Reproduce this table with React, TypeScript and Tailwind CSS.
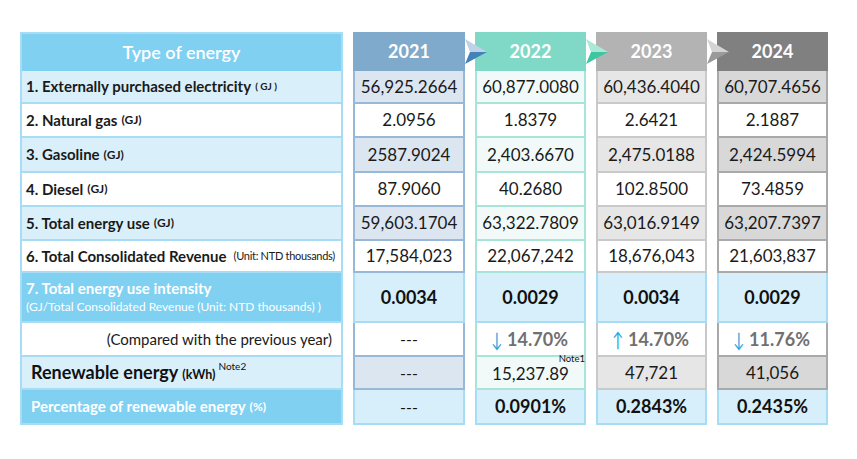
import React from "react";

type Col = {
  year: string;
  head: string;
  light: string;
  border: string;
  arrowTop?: string;
  arrowBot?: string;
};

const H = [33, 34, 35, 34, 34, 32, 50, 34, 33, 35];

const cols: Col[] = [
  { year: "2021", head: "bg-[#7faacc]", light: "bg-[#dce6f1]", border: "border-[#97b8d7]", arrowTop: "#bed1e6", arrowBot: "#4381b9" },
  { year: "2022", head: "bg-[#80d9c6]", light: "bg-[#f1faf9]", border: "border-[#a8e5d8]", arrowTop: "#abe8da", arrowBot: "#3dc7a1" },
  { year: "2023", head: "bg-[#b3b3b3]", light: "bg-[#e6e6e6]", border: "border-[#c9c9c9]", arrowTop: "#d4d4d4", arrowBot: "#9a9a9a" },
  { year: "2024", head: "bg-[#808080]", light: "bg-[#d8d8d8]", border: "border-[#a9a9a9]" },
];

const vals: string[][] = [
  ["56,925.2664", "60,877.0080", "60,436.4040", "60,707.4656"],
  ["2.0956", "1.8379", "2.6421", "2.1887"],
  ["2587.9024", "2,403.6670", "2,475.0188", "2,424.5994"],
  ["87.9060", "40.2680", "102.8500", "73.4859"],
  ["59,603.1704", "63,322.7809", "63,016.9149", "63,207.7397"],
  ["17,584,023", "22,067,242", "18,676,043", "21,603,837"],
];

const intensity = ["0.0034", "0.0029", "0.0034", "0.0029"];
const compare: (null | { dir: "down" | "up"; v: string })[] = [
  null,
  { dir: "down", v: "14.70%" },
  { dir: "up", v: "14.70%" },
  { dir: "down", v: "11.76%" },
];
const renew = ["---", "15,237.89", "47,721", "41,056"];
const pct = ["---", "0.0901%", "0.2843%", "0.2435%"];

function Arrow({ top, bot }: { top: string; bot: string }) {
  return (
    <svg
      className="absolute right-[-22px] top-[7px] z-10"
      width="22"
      height="25"
      viewBox="0 0 22 25"
    >
      <polygon points="0,0 22,13 5,13" fill={top} />
      <polygon points="5,13 22,13 0,25" fill={bot} />
    </svg>
  );
}

function LeftCol() {
  const lbl = "border-x-2 border-b-2 border-[#a8dcf4] flex items-center";
  const main = "text-[15px] font-bold text-[#1a1a1a]";
  const unit = "text-[12px] font-bold text-[#1a1a1a] ml-[4px]";
  return (
    <div className="w-[323px] flex flex-col">
      <div className="h-[39px] bg-[#80d0f2] border-2 border-b-0 border-[#a8dcf4] flex items-center justify-center text-white text-[18px] font-semibold">
        Type of energy
      </div>
      <div className={`${lbl} bg-[#d9f0fb] pl-[4px]`} style={{ height: H[0] }}>
        <span className={main}>1. Externally purchased electricity</span>
        <span className="text-[10px] font-bold text-[#1a1a1a] ml-[4px]">( GJ )</span>
      </div>
      <div className={`${lbl} bg-white pl-[4px]`} style={{ height: H[1] }}>
        <span className={main}>2. Natural gas</span>
        <span className={unit}>(GJ)</span>
      </div>
      <div className={`${lbl} bg-[#d9f0fb] pl-[4px]`} style={{ height: H[2] }}>
        <span className={main}>3. Gasoline</span>
        <span className={unit}>(GJ)</span>
      </div>
      <div className={`${lbl} bg-white pl-[4px]`} style={{ height: H[3] }}>
        <span className={main}>4. Diesel</span>
        <span className={unit}>(GJ)</span>
      </div>
      <div className={`${lbl} bg-[#d9f0fb] pl-[4px]`} style={{ height: H[4] }}>
        <span className={main}>5. Total energy use</span>
        <span className={unit}>(GJ)</span>
      </div>
      <div className={`${lbl} bg-white pl-[4px]`} style={{ height: H[5] }}>
        <span className={main}>6. Total Consolidated Revenue</span>
        <span className="text-[11px] text-[#1a1a1a] ml-[7px] tracking-[-0.3px]">(Unit: NTD thousands)</span>
      </div>
      <div
        className="border-x-2 border-b-2 border-[#a8dcf4] bg-[#80d0f2] pl-[4px] flex flex-col justify-center"
        style={{ height: H[6] }}
      >
        <span className="text-[15px] font-bold text-white leading-[20px]">7. Total energy use intensity</span>
        <span className="text-[12px] text-white leading-[18px]">(GJ/Total Consolidated Revenue (Unit: NTD thousands) )</span>
      </div>
      <div className={`${lbl} bg-white justify-end pr-[9px]`} style={{ height: H[7] }}>
        <span className="text-[15px] text-[#1a1a1a]">(Compared with the previous year)</span>
      </div>
      <div className={`${lbl} bg-[#d9f0fb] pl-[9px]`} style={{ height: H[8] }}>
        <span className="text-[18px] font-bold text-[#111]">Renewable energy</span>
        <span className="text-[12.5px] font-bold text-[#111] ml-[4px] mt-[5px]">(kWh)</span>
        <span className="text-[10px] text-[#111] ml-[3px] mt-[-12px]">Note2</span>
      </div>
      <div className={`${lbl} bg-[#80d0f2] pl-[9px]`} style={{ height: H[9] }}>
        <span className="text-[15px] font-bold text-white">Percentage of renewable energy</span>
        <span className="text-[12px] font-bold text-white ml-[4px]">(%)</span>
      </div>
    </div>
  );
}

function YearCol({ c, i, w }: { c: Col; i: number; w: string }) {
  const cell = `border-x-2 border-b-2 ${c.border} flex items-center justify-center`;
  const blue = "border-x-2 border-b-2 border-[#a8dcf4] bg-[#d7effb] flex items-center justify-center";
  const cmp = compare[i];
  return (
    <div className={`${w} flex flex-col`}>
      <div className={`relative h-[39px] ${c.head} flex items-center justify-center text-white text-[18px] font-bold`}>
        {c.year}
        {c.arrowTop && c.arrowBot && <Arrow top={c.arrowTop} bot={c.arrowBot} />}
      </div>
      {vals.map((row, r) => (
        <div
          key={r}
          className={`${cell} ${r % 2 === 0 && r < 5 ? c.light : "bg-white"} text-[17px] text-[#1a1a1a]`}
          style={{ height: H[r] }}
        >
          {row[i]}
        </div>
      ))}
      <div className={`${blue} text-[18px] font-bold text-[#111]`} style={{ height: H[6] }}>
        {intensity[i]}
      </div>
      <div className={`${cell} bg-white`} style={{ height: H[7] }}>
        {cmp ? (
          <span className="flex items-center text-[18px] font-bold text-[#707070] mr-[4px]">
            <span className="text-[#2aa7e0] font-normal text-[20px] mr-[3px] scale-x-[0.75] inline-block">
              {cmp.dir === "down" ? "↓" : "↑"}
            </span>
            {cmp.v}
          </span>
        ) : (
          <span className="text-[16px] text-[#1a1a1a]">---</span>
        )}
      </div>
      <div className={`${cell} ${c.light} relative`} style={{ height: H[8] }}>
        <span className={`${i === 0 ? "text-[16px]" : "text-[17px]"} text-[#1a1a1a] ${i === 1 ? "mt-[2px]" : ""}`}>{renew[i]}</span>
        {i === 1 && (
          <span className="absolute right-[-1px] top-[-3px] text-[9.5px] text-[#111] leading-none">Note1</span>
        )}
      </div>
      <div className={`${blue} ${i === 0 ? "text-[16px] font-normal" : "text-[18px] font-bold"} text-[#111]`} style={{ height: H[9] }}>
        {pct[i]}
      </div>
    </div>
  );
}

export default function App() {
  return (
    <div
      className="w-[857px] h-[459px] bg-white pt-[32px] pl-[20px] flex gap-[10px]"
      style={{ fontFamily: "Lato, 'Open Sans', sans-serif" }}
    >
      <LeftCol />
      {cols.map((c, i) => (
        <YearCol key={c.year} c={c} i={i} w={i === 0 ? "w-[112px]" : "w-[111px]"} />
      ))}
    </div>
  );
}
